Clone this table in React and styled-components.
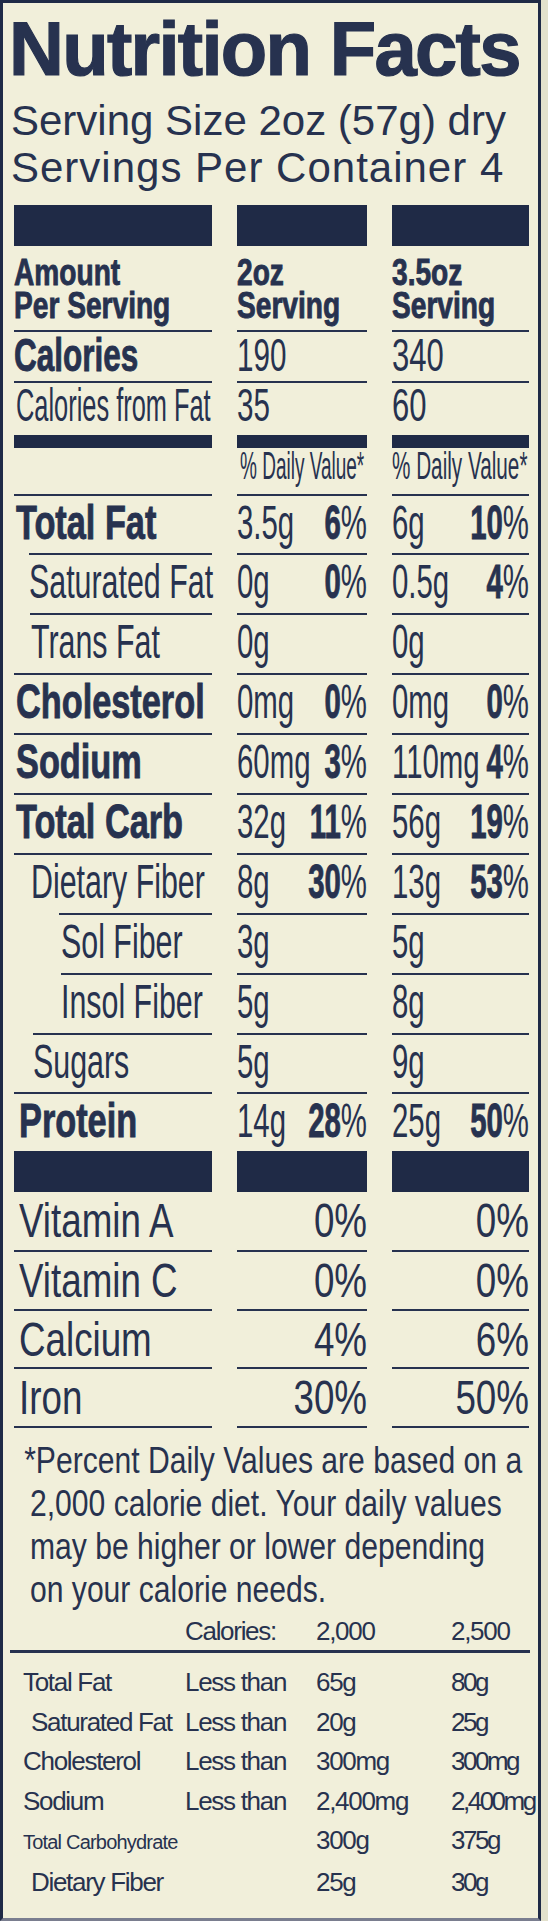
import React from 'react';
import styled, { createGlobalStyle } from 'styled-components';

const INK = '#27324f';
const BAR = '#1f2a46';
const PAPER = '#f1efda';

const GlobalStyle = createGlobalStyle`
  html, body {
    margin: 0;
    padding: 0;
    overflow: hidden;
    background: #e3e1cc;
  }
  body {
    font-family: 'Liberation Sans', Arial, sans-serif;
  }
`;

// baseline -> line-height for Liberation Sans (ascent .905, descent .212)
const lineHeight = (base, fs, border = 0) =>
  Math.round((2 * (base - border) - 0.693 * fs) * 10) / 10;

const Panel = styled.div`
  box-sizing: border-box;
  width: 541px;
  height: 1921px;
  padding-left: 11px;
  background: ${PAPER};
  color: ${INK};
  border-top: 3px solid ${BAR};
  border-left: 3px solid ${BAR};
  border-right: 3px solid ${BAR};
  border-bottom: 3px solid #7a7e8f;
  overflow: hidden;
`;

const Title = styled.h1`
  margin: 8px 0 0 -5px;
  font-size: 76px;
  line-height: 76px;
  font-weight: 700;
  letter-spacing: -1.7px;
  -webkit-text-stroke: 1.2px ${INK};
  white-space: nowrap;
`;

const Serving = styled.div`
  margin: 10px 0 0 -3px;
  font-size: 42px;
  line-height: 47px;
  white-space: nowrap;
`;

const ServingLine = styled.div`
  letter-spacing: ${(p) => p.$ls || 0}px;
`;

const Cols = styled.div`
  display: grid;
  grid-template-columns: 198px 130px 137px;
  column-gap: 25px;
  margin-top: ${(p) => p.$mt || 0}px;
`;

const Bar = styled.div`
  height: ${(p) => p.$h}px;
  background: ${BAR};
`;

const Cell = styled.div`
  box-sizing: border-box;
  height: ${(p) => p.$h}px;
  margin-left: ${(p) => p.$rule || 0}px;
  padding-left: ${(p) => p.$pad || 0}px;
  padding-top: ${(p) => p.$padTop || 0}px;
  border-top: ${(p) => (p.$top ? `2px solid ${INK}` : 'none')};
  border-bottom: ${(p) => (p.$bottom ? `2px solid ${INK}` : 'none')};
  font-size: ${(p) => p.$fs}px;
  line-height: ${(p) => p.$lh}px;
`;

const Squeeze = styled.div`
  display: flex;
  flex-direction: ${(p) => (p.$stack ? 'column' : 'row')};
  justify-content: ${(p) => (p.$end ? 'flex-end' : 'space-between')};
  width: calc(100% / ${(p) => p.$sx});
  transform: scaleX(${(p) => p.$sx});
  transform-origin: 0 0;
  font-weight: ${(p) => (p.$bold ? 700 : 400)};
  -webkit-text-stroke: ${(p) => (p.$bold ? `0.9px ${INK}` : '0')};
  white-space: nowrap;
`;

const Heavy = styled.b`
  font-weight: 700;
  -webkit-text-stroke: 0.9px ${INK};
`;

const Note = styled.p`
  margin: 11px 0 0 16px;
  font-size: 36px;
  line-height: 43px;
  text-indent: -7px;
  white-space: nowrap;
  transform: scaleX(0.836);
  transform-origin: 0 0;
`;

const DvGrid = styled.div`
  display: grid;
  grid-template-columns: 162px 131px 135px 1fr;
  align-items: baseline;
  margin: ${(p) => p.$mt || 0}px 8px 0 -4px;
  padding: 0 0 ${(p) => p.$pb || 0}px 13px;
  border-bottom: ${(p) => (p.$rule ? `3px solid ${INK}` : 'none')};
  font-size: 26px;
  line-height: ${(p) => p.$lh}px;
  letter-spacing: -1.3px;
  white-space: nowrap;
`;

const DvName = styled.span`
  padding-left: ${(p) => p.$pad || 0}px;
  font-size: ${(p) => p.$fs || 26}px;
  letter-spacing: ${(p) => (p.$fs ? '-0.8px' : '-1.3px')};
`;

const DvLast = styled.span`
  letter-spacing: -2.5px;
`;

const nutrients = [
  { name: 'Total Fat', bold: true, pad: 2, a: ['3.5g', '6'], b: ['6g', '10'], h: 59 },
  { name: 'Saturated Fat', rule: 15, a: ['0g', '0'], b: ['0.5g', '4'] },
  { name: 'Trans Fat', rule: 16, pad: 1, a: ['0g'], b: ['0g'] },
  { name: 'Cholesterol', bold: true, pad: 2, a: ['0mg', '0'], b: ['0mg', '0'] },
  { name: 'Sodium', bold: true, pad: 2, a: ['60mg', '3'], b: ['110mg', '4'] },
  { name: 'Total Carb', bold: true, pad: 2, a: ['32g', '11'], b: ['56g', '19'] },
  { name: 'Dietary Fiber', pad: 17, a: ['8g', '30'], b: ['13g', '53'] },
  { name: 'Sol Fiber', rule: 45, pad: 2, a: ['3g'], b: ['5g'] },
  { name: 'Insol Fiber', rule: 47, a: ['5g'], b: ['8g'] },
  { name: 'Sugars', rule: 19, a: ['5g'], b: ['9g'], h: 59 },
  { name: 'Protein', bold: true, pad: 5, a: ['14g', '28'], b: ['25g', '50'], h: 59 },
];

const vitamins = [
  { name: 'Vitamin A', a: '0%', b: '0%', h: 60 },
  { name: 'Vitamin C', a: '0%', b: '0%', h: 59 },
  { name: 'Calcium', a: '4%', b: '6%', h: 58 },
  { name: 'Iron', a: '30%', b: '50%', h: 59 },
];

const limits = [
  { name: 'Total Fat', less: true, a: '65g', b: '80g' },
  { name: 'Saturated Fat', pad: 8, less: true, a: '20g', b: '25g' },
  { name: 'Cholesterol', less: true, a: '300mg', b: '300mg' },
  { name: 'Sodium', less: true, a: '2,400mg', b: '2,400mg' },
  { name: 'Total Carbohydrate', fs: 20, a: '300g', b: '375g' },
  { name: 'Dietary Fiber', pad: 8, a: '25g', b: '30g' },
];

function Amount({ value }) {
  const [qty, pct] = value;
  return (
    <Squeeze $sx={0.6}>
      <span>{qty}</span>
      {pct && (
        <span>
          <Heavy>{pct}</Heavy>%
        </span>
      )}
    </Squeeze>
  );
}

function NutrientRow({ n }) {
  const h = n.h || 60;
  const lh = lineHeight(45.5, 49, 2);
  return (
    <Cols>
      <Cell $top $h={h} $rule={n.rule} $pad={n.pad} $fs={49} $lh={lh}>
        <Squeeze $sx={n.bold ? 0.7 : 0.62} $bold={n.bold}>
          {n.name}
        </Squeeze>
      </Cell>
      <Cell $top $h={h} $fs={49} $lh={lh}>
        <Amount value={n.a} />
      </Cell>
      <Cell $top $h={h} $fs={49} $lh={lh}>
        <Amount value={n.b} />
      </Cell>
    </Cols>
  );
}

function VitaminRow({ v }) {
  const lh = lineHeight(45.5, 49);
  return (
    <Cols>
      <Cell $bottom $h={v.h} $pad={5} $fs={49} $lh={lh}>
        <Squeeze $sx={0.75}>{v.name}</Squeeze>
      </Cell>
      <Cell $bottom $h={v.h} $fs={49} $lh={lh}>
        <Squeeze $sx={0.75} $end>
          {v.a}
        </Squeeze>
      </Cell>
      <Cell $bottom $h={v.h} $fs={49} $lh={lh}>
        <Squeeze $sx={0.75} $end>
          {v.b}
        </Squeeze>
      </Cell>
    </Cols>
  );
}

export default function App() {
  const calLh = lineHeight(41, 47, 2);
  const fatLh = lineHeight(40, 47, 2);
  const dvLh = lineHeight(32, 38);

  return (
    <>
      <GlobalStyle />
      <Panel>
        <Title>Nutrition Facts</Title>
        <Serving>
          <ServingLine>Serving Size 2oz (57g) dry</ServingLine>
          <ServingLine $ls={1}>Servings Per Container 4</ServingLine>
        </Serving>

        <Cols $mt={14}>
          <Bar $h={41} />
          <Bar $h={41} />
          <Bar $h={41} />
        </Cols>

        <Cols>
          <Cell $h={84} $padTop={10} $fs={37} $lh={33}>
            <Squeeze $sx={0.76} $bold $stack>
              <span>Amount</span>
              <span>Per Serving</span>
            </Squeeze>
          </Cell>
          <Cell $h={84} $padTop={10} $fs={37} $lh={33}>
            <Squeeze $sx={0.76} $bold $stack>
              <span>2oz</span>
              <span>Serving</span>
            </Squeeze>
          </Cell>
          <Cell $h={84} $padTop={10} $fs={37} $lh={33}>
            <Squeeze $sx={0.76} $bold $stack>
              <span>3.5oz</span>
              <span>Serving</span>
            </Squeeze>
          </Cell>
        </Cols>

        <Cols>
          <Cell $top $h={51} $fs={47} $lh={calLh}>
            <Squeeze $sx={0.67} $bold>
              Calories
            </Squeeze>
          </Cell>
          <Cell $top $h={51} $fs={47} $lh={calLh}>
            <Squeeze $sx={0.63}>190</Squeeze>
          </Cell>
          <Cell $top $h={51} $fs={47} $lh={calLh}>
            <Squeeze $sx={0.66}>340</Squeeze>
          </Cell>
        </Cols>

        <Cols>
          <Cell $top $h={54} $pad={2} $fs={47} $lh={fatLh}>
            <Squeeze $sx={0.54}>Calories from Fat</Squeeze>
          </Cell>
          <Cell $top $h={54} $fs={47} $lh={fatLh}>
            <Squeeze $sx={0.63}>35</Squeeze>
          </Cell>
          <Cell $top $h={54} $fs={47} $lh={fatLh}>
            <Squeeze $sx={0.66}>60</Squeeze>
          </Cell>
        </Cols>

        <Cols>
          <Bar $h={13} />
          <Bar $h={13} />
          <Bar $h={13} />
        </Cols>

        <Cols>
          <Cell $h={46} $fs={38} $lh={dvLh} />
          <Cell $h={46} $pad={3} $fs={38} $lh={dvLh}>
            <Squeeze $sx={0.5}>% Daily Value*</Squeeze>
          </Cell>
          <Cell $h={46} $fs={38} $lh={dvLh}>
            <Squeeze $sx={0.545}>% Daily Value*</Squeeze>
          </Cell>
        </Cols>

        {nutrients.map((n) => (
          <NutrientRow key={n.name} n={n} />
        ))}

        <Cols>
          <Bar $h={41} />
          <Bar $h={41} />
          <Bar $h={41} />
        </Cols>

        {vitamins.map((v) => (
          <VitaminRow key={v.name} v={v} />
        ))}

        <Note>
          *Percent Daily Values are based on a
          <br />
          2,000 calorie diet. Your daily values
          <br />
          may be higher or lower depending
          <br />
          on your calorie needs.
        </Note>

        <DvGrid $mt={5} $pb={3} $lh={31} $rule>
          <span />
          <span>Calories:</span>
          <span>2,000</span>
          <span>2,500</span>
        </DvGrid>

        <DvGrid $mt={10} $lh={39.5}>
          {limits.map((l) => (
            <React.Fragment key={l.name}>
              <DvName $pad={l.pad} $fs={l.fs}>
                {l.name}
              </DvName>
              <span>{l.less ? 'Less than' : ''}</span>
              <span>{l.a}</span>
              <DvLast>{l.b}</DvLast>
            </React.Fragment>
          ))}
        </DvGrid>
      </Panel>
    </>
  );
}
